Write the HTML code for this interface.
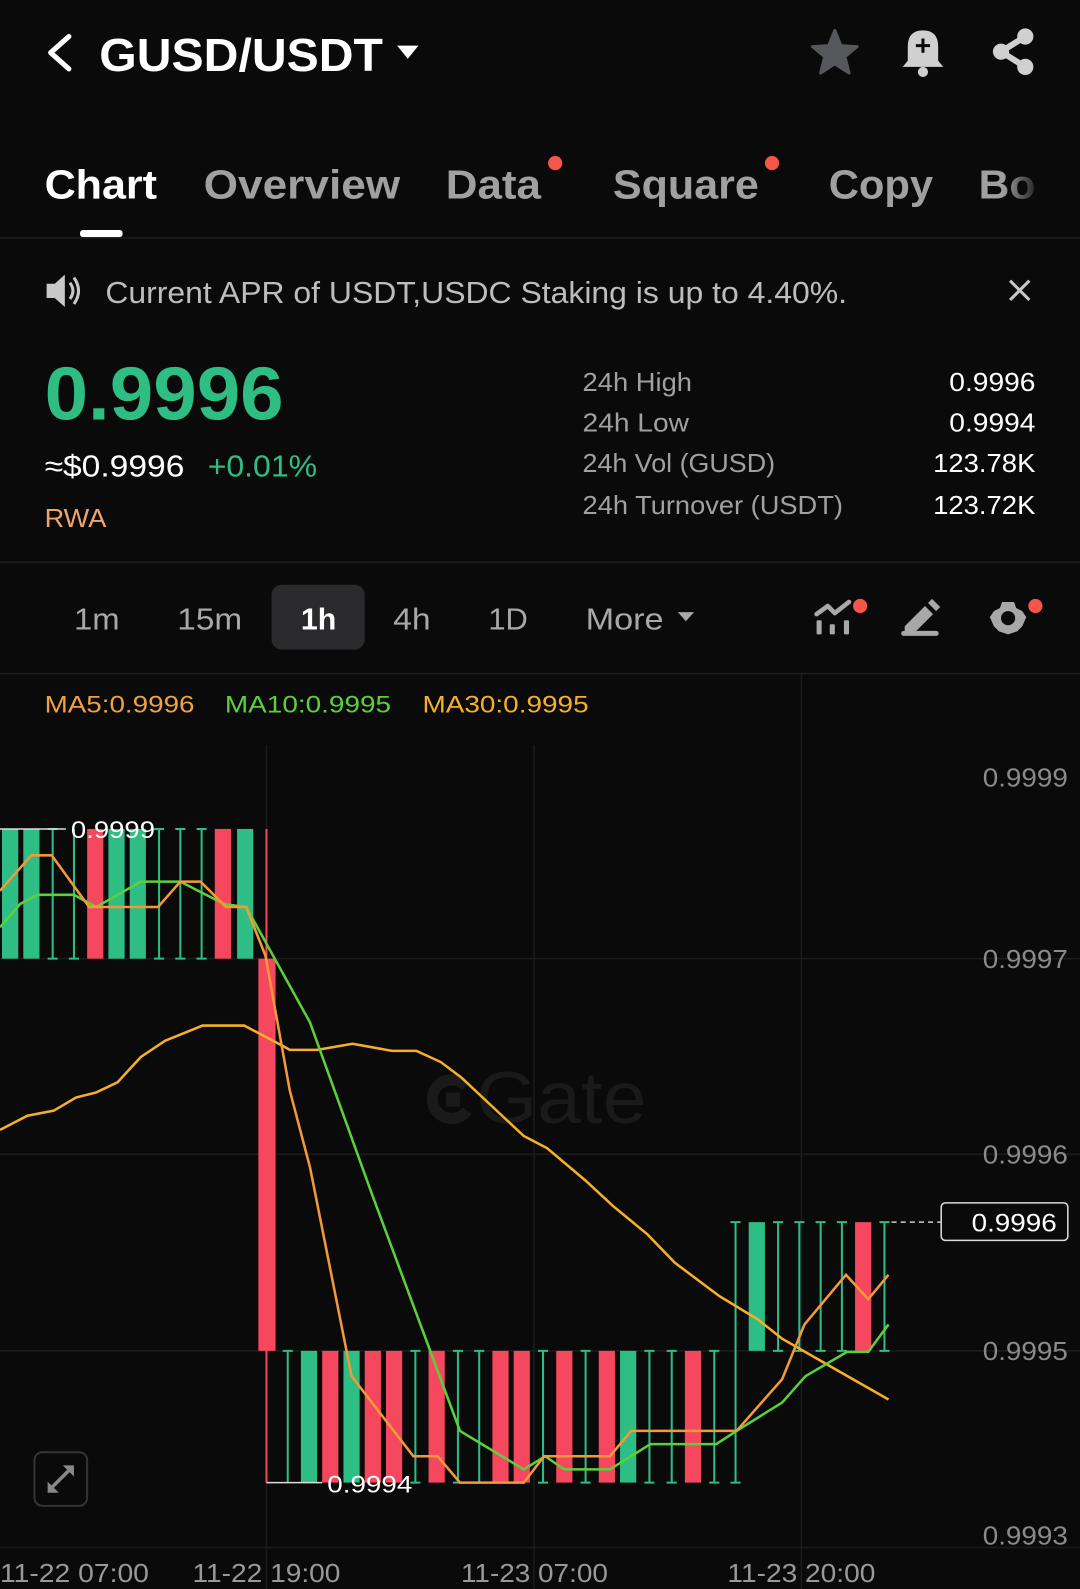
<!DOCTYPE html>
<html><head><meta charset="utf-8"><style>
html,body{margin:0;padding:0;background:#0a0a0a;overflow:hidden}
svg{display:block}
text{font-family:"Liberation Sans",sans-serif}
</style></head><body>
<svg width="1080" height="1589" viewBox="0 0 1066 1568" preserveAspectRatio="none" xmlns="http://www.w3.org/2000/svg">
<rect width="1066" height="1568" fill="#0a0a0a"/>
<!-- header -->
<path d="M68 36 L50 52 L68 68" stroke="#fff" stroke-width="5" fill="none" stroke-linecap="round" stroke-linejoin="round"/>
<text x="98" y="70" font-size="46" font-weight="bold" fill="#fff" textLength="280" lengthAdjust="spacingAndGlyphs">GUSD/USDT</text>
<path d="M392 45 L413 45 L402.5 58 Z" fill="#fff"/>
<path d="M824 30 L830 45 L846 46 L834 56 L838 72 L824 63 L810 72 L814 56 L802 46 L818 45 Z" fill="#55575b" stroke="#55575b" stroke-width="3" stroke-linejoin="round"/>
<path d="M896 60 L896 46 Q896 30 911 30 Q926 30 926 46 L926 60 L931 66 L891 66 Z" fill="#d0d0d0"/>
<circle cx="911" cy="71" r="5" fill="#d0d0d0"/>
<path d="M911 38 V52 M904 45 H918" stroke="#0a0a0a" stroke-width="3"/>
<g fill="#d0d0d0"><circle cx="1012" cy="36" r="8"/><circle cx="1012" cy="66" r="8"/><circle cx="988" cy="51" r="8"/></g>
<path d="M1012 36 L988 51 L1012 66" stroke="#d0d0d0" stroke-width="6" fill="none"/>
<!-- tabs -->
<g font-size="40" font-weight="bold" lengthAdjust="spacingAndGlyphs">
<text x="44" y="196" fill="#fff" textLength="111" lengthAdjust="spacingAndGlyphs">Chart</text>
<text x="201" y="196" fill="#a0a0a0" textLength="194" lengthAdjust="spacingAndGlyphs">Overview</text>
<text x="440" y="196" fill="#a0a0a0" textLength="94" lengthAdjust="spacingAndGlyphs">Data</text>
<text x="605" y="196" fill="#a0a0a0" textLength="144" lengthAdjust="spacingAndGlyphs">Square</text>
<text x="818" y="196" fill="#a0a0a0" textLength="103" lengthAdjust="spacingAndGlyphs">Copy</text>
<text x="966" y="196" fill="#a0a0a0" textLength="56" lengthAdjust="spacingAndGlyphs">Bo</text></g>
<circle cx="548" cy="161" r="7" fill="#f5564a"/>
<circle cx="762" cy="161" r="7" fill="#f5564a"/>
<defs><linearGradient id="fd" x1="0" x2="1"><stop offset="0" stop-color="#0a0a0a" stop-opacity="0"/><stop offset="1" stop-color="#0a0a0a"/></linearGradient></defs>
<rect x="990" y="150" width="40" height="60" fill="url(#fd)"/>
<rect x="79" y="227" width="42" height="7" rx="3" fill="#fff"/>
<rect x="0" y="234" width="1066" height="1.5" fill="#1e1e1e"/>
<!-- announcement -->
<path d="M46 280 L54 280 L64 271 L64 303 L54 294 L46 294 Z" fill="#c8c8c8"/>
<path d="M69 279 Q75 287 69 295 M73 274 Q82 287 73 300" stroke="#c8c8c8" stroke-width="3" fill="none"/>
<text x="104" y="299" font-size="30" fill="#bdbdbd" textLength="732" lengthAdjust="spacingAndGlyphs">Current APR of USDT,USDC Staking is up to 4.40%.</text>
<path d="M997 277 L1016 296 M1016 277 L997 296" stroke="#c8c8c8" stroke-width="3"/>
<!-- price -->
<text x="44" y="414" font-size="74" font-weight="bold" fill="#2ebd82" textLength="236" lengthAdjust="spacingAndGlyphs">0.9996</text>
<text x="44" y="470" font-size="30" fill="#fff" textLength="138" lengthAdjust="spacingAndGlyphs">≈$0.9996</text>
<text x="205" y="470" font-size="30" fill="#2ebd82" textLength="108" lengthAdjust="spacingAndGlyphs">+0.01%</text>
<text x="44" y="520" font-size="26" fill="#f0a36a" textLength="61" lengthAdjust="spacingAndGlyphs">RWA</text>
<g font-size="26" fill="#a0a0a0">
<text x="575" y="386" textLength="108" lengthAdjust="spacingAndGlyphs">24h High</text><text x="575" y="426" textLength="105" lengthAdjust="spacingAndGlyphs">24h Low</text>
<text x="575" y="466" textLength="190" lengthAdjust="spacingAndGlyphs">24h Vol (GUSD)</text><text x="575" y="507" textLength="257" lengthAdjust="spacingAndGlyphs">24h Turnover (USDT)</text></g>
<g font-size="26" fill="#fff">
<text x="937" y="386" textLength="85" lengthAdjust="spacingAndGlyphs">0.9996</text><text x="937" y="426" textLength="85" lengthAdjust="spacingAndGlyphs">0.9994</text>
<text x="921" y="466" textLength="101" lengthAdjust="spacingAndGlyphs">123.78K</text><text x="921" y="507" textLength="101" lengthAdjust="spacingAndGlyphs">123.72K</text></g>
<rect x="0" y="554" width="1066" height="1.5" fill="#1e1e1e"/>
<!-- timeframes -->
<rect x="268" y="577" width="92" height="64" rx="10" fill="#2a2a2c"/>
<g font-size="30" fill="#a8a8a8">
<text x="73" y="621" textLength="45" lengthAdjust="spacingAndGlyphs">1m</text><text x="175" y="621" textLength="64" lengthAdjust="spacingAndGlyphs">15m</text>
<text x="297" y="621" fill="#fff" font-weight="bold" textLength="35" lengthAdjust="spacingAndGlyphs">1h</text>
<text x="388" y="621" textLength="37" lengthAdjust="spacingAndGlyphs">4h</text><text x="482" y="621" textLength="39" lengthAdjust="spacingAndGlyphs">1D</text><text x="578" y="621" textLength="77" lengthAdjust="spacingAndGlyphs">More</text></g>
<path d="M669 604 L685 604 L677 613 Z" fill="#a8a8a8"/>
<g fill="#a8a8a8">
<rect x="806" y="612" width="5" height="14" rx="1"/><rect x="819" y="616" width="5" height="10" rx="1"/><rect x="833" y="612" width="5" height="14" rx="1"/></g>
<path d="M806 606 L817 598 L824 605 L838 594" stroke="#a8a8a8" stroke-width="4.5" fill="none" stroke-linecap="round" stroke-linejoin="round"/>
<circle cx="849" cy="598" r="7" fill="#f5564a"/>
<path d="M892 625 L924 625" stroke="#a8a8a8" stroke-width="5" stroke-linecap="round"/>
<path d="M893 618 L913 598 L921 606 L901 626 L893 626 Z" fill="#a8a8a8"/>
<path d="M916 595 L920 591 L928 599 L924 603 Z" fill="#a8a8a8"/>
<g transform="translate(995,610)">
<path d="M-6 -16 L6 -16 L8 -10 L14 -7 L18 -1 L14 8 L9 13 L0 16 L-9 13 L-14 8 L-18 -1 L-14 -7 L-8 -10 Z" fill="#a8a8a8"/>
<circle r="7" fill="#0a0a0a"/></g>
<circle cx="1022" cy="598" r="7" fill="#f5564a"/>
<rect x="0" y="664" width="1066" height="1.5" fill="#1e1e1e"/>
<!-- MA -->
<text x="44" y="703" font-size="24" fill="#f0a040" textLength="148" lengthAdjust="spacingAndGlyphs">MA5:0.9996</text>
<text x="222" y="703" font-size="24" fill="#5cd03c" textLength="164" lengthAdjust="spacingAndGlyphs">MA10:0.9995</text>
<text x="417" y="703" font-size="24" fill="#f5b028" textLength="164" lengthAdjust="spacingAndGlyphs">MA30:0.9995</text>
<!-- grid -->
<g stroke="#1c1c1c" stroke-width="1.5">
<line x1="263" y1="735" x2="263" y2="1568"/><line x1="527" y1="735" x2="527" y2="1568"/><line x1="791" y1="665" x2="791" y2="1568"/>
<line x1="0" y1="946" x2="1066" y2="946"/><line x1="0" y1="1139" x2="1066" y2="1139"/><line x1="0" y1="1333" x2="1066" y2="1333"/><line x1="0" y1="1527" x2="1066" y2="1527"/></g>
<g font-size="26" fill="#8a8a8a">
<text x="970" y="776" textLength="84" lengthAdjust="spacingAndGlyphs">0.9999</text><text x="970" y="955" textLength="84" lengthAdjust="spacingAndGlyphs">0.9997</text><text x="970" y="1148" textLength="84" lengthAdjust="spacingAndGlyphs">0.9996</text><text x="970" y="1342" textLength="84" lengthAdjust="spacingAndGlyphs">0.9995</text><text x="970" y="1524" textLength="84" lengthAdjust="spacingAndGlyphs">0.9993</text></g>
<!-- watermark -->
<path d="M460 1072 A19 19 0 1 0 461 1096" fill="none" stroke="#1a1a1a" stroke-width="11"/>
<rect x="440" y="1078" width="14" height="14" fill="#1a1a1a"/>
<text x="470" y="1108" font-size="72" fill="#1a1a1a" textLength="168" lengthAdjust="spacingAndGlyphs">Gate</text>
<!-- candles -->
<g fill="#2ebd85">
<rect x="2" y="818" width="16" height="128"/><rect x="23" y="818" width="16" height="128"/>
<rect x="107" y="818" width="16" height="128"/><rect x="128" y="818" width="16" height="128"/>
<rect x="234" y="818" width="16" height="128"/>
<rect x="297" y="1333" width="16" height="130"/><rect x="339" y="1333" width="16" height="130"/>
<rect x="612" y="1333" width="16" height="130"/>
<rect x="739" y="1206" width="16" height="127"/></g>
<g fill="#f5475e">
<rect x="86" y="818" width="16" height="128"/><rect x="212" y="818" width="16" height="128"/>
<rect x="255" y="946" width="17" height="387"/>
<rect x="318" y="1333" width="16" height="130"/><rect x="360" y="1333" width="16" height="130"/><rect x="381" y="1333" width="16" height="130"/>
<rect x="423" y="1333" width="16" height="130"/><rect x="486" y="1333" width="16" height="130"/><rect x="507" y="1333" width="16" height="130"/>
<rect x="549" y="1333" width="16" height="130"/><rect x="591" y="1333" width="16" height="130"/><rect x="676" y="1333" width="16" height="130"/>
<rect x="844" y="1206" width="16" height="127"/></g>
<line x1="263" y1="818" x2="263" y2="1463" stroke="#f5475e" stroke-width="2"/>
<g stroke="#2ebd85" stroke-width="2" fill="none">
<path d="M52 818V946M47 818H57M47 946H57"/><path d="M73 818V946M68 946H78"/>
<path d="M157 818V946M152 818H162M152 946H162"/><path d="M178 818V946M173 818H183M173 946H183"/><path d="M199 818V946M194 818H204M194 946H204"/>
<path d="M284 1333V1463M279 1333H289"/>
<path d="M410 1333V1463M405 1333H415M405 1463H415"/>
<path d="M452 1333V1463M447 1333H457M447 1463H457"/><path d="M473 1333V1463M468 1333H478M468 1463H478"/>
<path d="M536 1333V1463M531 1333H541M531 1463H541"/><path d="M578 1333V1463M573 1333H583M573 1463H583"/>
<path d="M641 1333V1463M636 1333H646M636 1463H646"/><path d="M663 1333V1463M658 1333H668M658 1463H668"/>
<path d="M705 1333V1463M700 1333H710M700 1463H710"/>
<path d="M726 1206V1463M721 1206H731M721 1463H731"/>
<path d="M768 1206V1333M763 1206H773M763 1333H773"/><path d="M789 1206V1333M784 1206H794M784 1333H794"/>
<path d="M810 1206V1333M805 1206H815M805 1333H815"/><path d="M831 1206V1333M826 1206H836M826 1333H836"/>
<path d="M873 1206V1333M868 1206H878M868 1333H878"/></g>
<!-- markers -->
<line x1="0" y1="818" x2="65" y2="818" stroke="#ddd" stroke-width="1.5"/>
<text x="70" y="827" font-size="24" fill="#fff" textLength="83" lengthAdjust="spacingAndGlyphs">0.9999</text>
<line x1="263" y1="1463" x2="318" y2="1463" stroke="#ddd" stroke-width="1.5"/>
<text x="323" y="1473" font-size="24" fill="#fff" textLength="84" lengthAdjust="spacingAndGlyphs">0.9994</text>
<!-- MA lines -->
<polyline fill="none" stroke="#f5b028" stroke-width="2.5" points="0,1115 27,1101 53,1096 75,1083 95,1078 116,1068 139,1043 163,1027 200,1012 241,1012 279,1032 286,1036 313,1036 348,1030 387,1037 411,1037 435,1048 455,1063 517,1121 540,1133 578,1165 605,1190 639,1218 666,1246 710,1279 748,1302 772,1321 833,1356 877,1381"/>
<polyline fill="none" stroke="#5cd03c" stroke-width="2.5" points="0,915 20,892 37,883 73,883 95,895 139,870 178,870 221,892 243,895 306,1009 367,1178 454,1412 517,1450 538,1437 557,1450 602,1450 642,1425 707,1425 727,1412 772,1384 795,1358 836,1334 857,1334 877,1307"/>
<polyline fill="none" stroke="#f39a38" stroke-width="2.5" points="0,879 31,844 51,844 88,895 156,895 178,870 198,870 223,895 243,895 262,943 286,1076 306,1152 347,1358 408,1437 432,1437 454,1463 517,1463 537,1437 602,1437 623,1412 727,1412 772,1361 794,1307 835,1258 857,1282 877,1258"/>
<!-- current price -->
<line x1="880" y1="1206" x2="929" y2="1206" stroke="#ccc" stroke-width="1.5" stroke-dasharray="5,4"/>
<rect x="929" y="1187" width="125" height="37" rx="4" fill="#0a0a0a" stroke="#ddd" stroke-width="1.5"/>
<text x="959" y="1215" font-size="25" fill="#fff" textLength="84" lengthAdjust="spacingAndGlyphs">0.9996</text>
<!-- expand -->
<rect x="34" y="1433" width="52" height="53" rx="8" fill="none" stroke="#333" stroke-width="2"/>
<path d="M50 1469 L69 1450" stroke="#888" stroke-width="3.5"/>
<path d="M62 1446 L73 1446 L73 1457 Z M47 1462 L47 1473 L58 1473 Z" fill="#888"/>
<!-- x axis -->
<g font-size="26" fill="#999">
<text x="0" y="1561" textLength="147" lengthAdjust="spacingAndGlyphs">11-22 07:00</text><text x="190" y="1561" textLength="146" lengthAdjust="spacingAndGlyphs">11-22 19:00</text>
<text x="455" y="1561" textLength="145" lengthAdjust="spacingAndGlyphs">11-23 07:00</text><text x="718" y="1561" textLength="146" lengthAdjust="spacingAndGlyphs">11-23 20:00</text></g>
</svg>
</body></html>
